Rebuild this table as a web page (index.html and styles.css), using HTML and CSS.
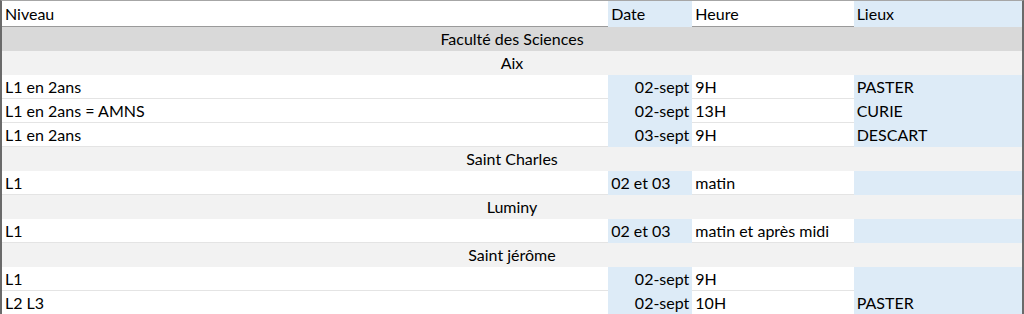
FILE: index.html
```html
<!DOCTYPE html>
<html lang="fr">
<head>
    <meta charset="UTF-8" />
    <meta name="viewport" content="width=device-width, initial-scale=1.0" />
    <title>Rentrée - Faculté des Sciences</title>
    <link rel="stylesheet" href="styles.css">
</head>
<body>
    <div class="sheet">
        <table class="planning">
            <colgroup>
                <col class="col-niveau" />
                <col class="col-date" />
                <col class="col-heure" />
                <col class="col-lieux" />
            </colgroup>
            <thead>
                <tr>
                    <th>Niveau</th>
                    <th class="blue">Date</th>
                    <th>Heure</th>
                    <th class="blue">Lieux</th>
                </tr>
            </thead>
            <tbody>
                <tr class="faculty"><td colspan="4">Faculté des Sciences</td></tr>

                <tr class="site"><td colspan="4">Aix</td></tr>
                <tr>
                    <td>L1 en 2ans</td>
                    <td class="blue num">02-sept</td>
                    <td>9H</td>
                    <td class="blue">PASTER</td>
                </tr>
                <tr>
                    <td>L1 en 2ans = AMNS</td>
                    <td class="blue num">02-sept</td>
                    <td>13H</td>
                    <td class="blue">CURIE</td>
                </tr>
                <tr>
                    <td>L1 en 2ans</td>
                    <td class="blue num">03-sept</td>
                    <td>9H</td>
                    <td class="blue">DESCART</td>
                </tr>

                <tr class="site"><td colspan="4">Saint Charles</td></tr>
                <tr>
                    <td>L1</td>
                    <td class="blue">02 et 03</td>
                    <td>matin</td>
                    <td class="blue"></td>
                </tr>

                <tr class="site"><td colspan="4">Luminy</td></tr>
                <tr>
                    <td>L1</td>
                    <td class="blue">02 et 03</td>
                    <td>matin et après midi</td>
                    <td class="blue"></td>
                </tr>

                <tr class="site"><td colspan="4">Saint jérôme</td></tr>
                <tr>
                    <td>L1</td>
                    <td class="blue num">02-sept</td>
                    <td>9H</td>
                    <td class="blue"></td>
                </tr>
                <tr>
                    <td>L2 L3</td>
                    <td class="blue num">02-sept</td>
                    <td>10H</td>
                    <td class="blue">PASTER</td>
                </tr>
            </tbody>
        </table>
    </div>
</body>
</html>
```

FILE: styles.css
```css
body {
    margin: 0;
    background: #ffffff;
    font-family: Lato, "Open Sans", sans-serif;
    font-size: 16px;
    color: #000;
}
.sheet {
    width: 1024px;
    box-sizing: border-box;
    border-left: 2px solid #6a6a6a;
    border-right: 2px solid #6a6a6a;
    border-top: 1px solid #a6a6a6;
}
.planning {
    width: 100%;
    border-collapse: collapse;
    table-layout: fixed;
}
.col-niveau {
    width: 605px;
}
.col-date {
    width: 84px;
}
.col-heure {
    width: 161px;
}
.col-lieux {
    width: 168px;
}
.planning th {
    height: 25px;
    padding: 0 3px;
    font-weight: normal;
    text-align: left;
    border-bottom: 1px solid #9a9a9a;
}
.planning td {
    height: 23px;
    padding: 0 3px;
    white-space: nowrap;
    border-bottom: 1px solid #e4e4e4;
}
.planning .blue {
    background: #ddebf7;
    border-bottom-color: #ddebf7;
}
.planning .num {
    text-align: right;
}
.faculty td {
    background: #d9d9d9;
    border-bottom-color: #d9d9d9;
    text-align: center;
}
.site td {
    background: #f2f2f2;
    border-bottom-color: #f2f2f2;
    text-align: center;
}
```
